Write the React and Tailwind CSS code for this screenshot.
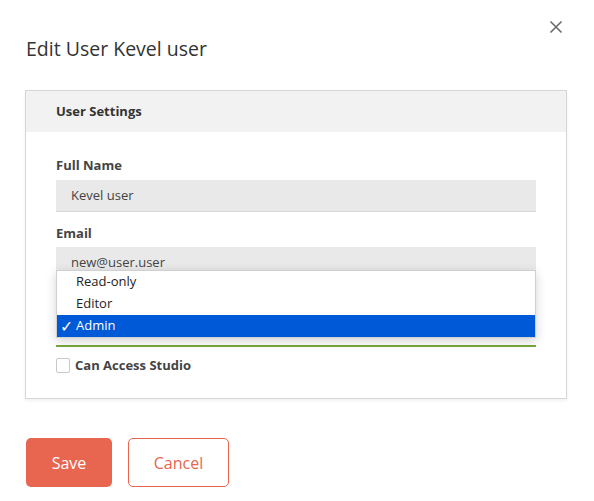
import React from "react"

const font = { fontFamily: '"Open Sans", "Noto Sans", sans-serif' }

function Field({ label, value }) {
  return (
    <div>
      <p className="text-[13px] leading-[18px] font-bold text-[#444]">{label}</p>
      <div className="mt-[6px] h-[32px] bg-[#e9e9e9] border-b border-[#d6d6d6] pl-[15px] flex items-center text-[13px] text-[#444]">
        {value}
      </div>
    </div>
  )
}

function RoleMenu() {
  const items = ["Read-only", "Editor", "Admin"]
  return (
    <div className="absolute left-[30px] right-[30px] top-[179px] bg-white border border-[#d0d0d0] shadow-[0_3px_10px_rgba(0,0,0,0.18)]">
      {items.map((item) => {
        const selected = item === "Admin"
        return (
          <div
            key={item}
            className={
              selected
                ? "h-[22px] flex items-center pl-[3px] text-[13px] bg-[#0059d6] text-white"
                : "h-[22px] flex items-center pl-[3px] text-[13px] text-[#222]"
            }
          >
            <span className="w-[16px] text-[16px] leading-none">{selected ? "✓" : ""}</span>
            {item}
          </div>
        )
      })}
    </div>
  )
}

function App() {
  return (
    <main style={font} className="w-[594px] h-[501px] bg-white px-[25px] pt-[36px] relative">
      <button className="absolute left-[549px] top-[20px] w-[14px] h-[14px] text-[#6b6b6b]">
        <svg viewBox="0 0 14 14" width="14" height="14" fill="none" stroke="currentColor" strokeWidth="1.6">
          <path d="M1.5 1.5 L12.5 12.5 M12.5 1.5 L1.5 12.5" />
        </svg>
      </button>

      <h2 className="text-[19.5px] leading-[25px] text-[#333] pl-px">Edit User Kevel user</h2>

      <section className="relative mt-[29px] w-[542px] border border-[#d6d6d6] shadow-[0_2px_3px_rgba(0,0,0,0.06)]">
        <div className="h-[41px] bg-[#f2f2f2] px-[30px] flex items-center">
          <p className="text-[13px] font-bold text-[#333]">User Settings</p>
        </div>

        <div className="px-[30px] pt-[24px] pb-[25px]">
          <Field label="Full Name" value="Kevel user" />
          <div className="mt-[12px]">
            <p className="text-[13px] leading-[18px] font-bold text-[#444]">Email</p>
            <div className="mt-[5px] h-[32px] bg-[#e9e9e9] border-b border-[#d6d6d6] pl-[15px] flex items-center text-[13px] text-[#444]">
              new@user.user
            </div>
          </div>

          {/* role select, covered by the open menu */}
          <div className="mt-[12px]">
            <div className="h-[18px]" />
            <div className="mt-[6px] h-[32px] bg-white border-b-2 border-[#77a83b]" />
          </div>

          <label className="mt-[11px] flex items-center gap-[5px]">
            <span className="w-[14px] h-[15px] border border-[#c8c8c8] bg-white rounded-[2px]" />
            <span className="text-[13px] leading-[15px] font-bold text-[#444]">Can Access Studio</span>
          </label>
        </div>

        <RoleMenu />
      </section>

      <div className="mt-[39px] ml-px flex gap-[16px]">
        <button className="w-[86px] h-[49px] rounded-[5px] bg-[#e8654f] text-white text-[16px] font-medium">Save</button>
        <button className="w-[101px] h-[49px] rounded-[5px] border border-[#e8654f] bg-white text-[#e8654f] text-[16px] font-medium">
          Cancel
        </button>
      </div>
    </main>
  )
}

export default App
